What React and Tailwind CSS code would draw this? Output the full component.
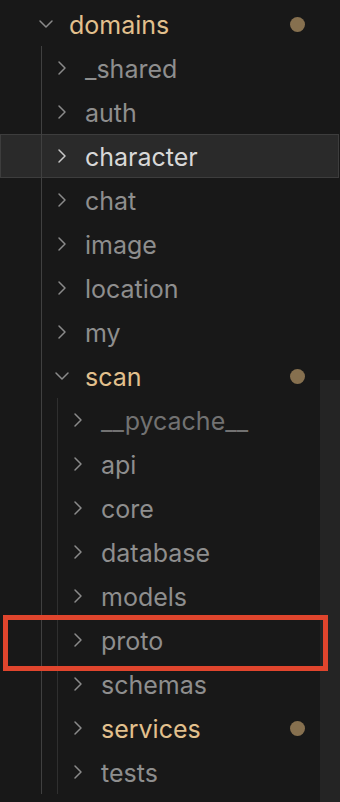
import React from "react";

const tree = {
  name: "domains",
  color: "yellow",
  dot: true,
  children: [
    { name: "_shared" },
    { name: "auth" },
    { name: "character", selected: true },
    { name: "chat" },
    { name: "image" },
    { name: "location" },
    { name: "my" },
    {
      name: "scan",
      color: "yellow",
      dot: true,
      children: [
        { name: "__pycache__", color: "dim" },
        { name: "api" },
        { name: "core" },
        { name: "database" },
        { name: "models" },
        { name: "proto" },
        { name: "schemas" },
        { name: "services", color: "yellow", dot: true },
        { name: "tests" },
      ],
    },
  ],
};

const padByDepth = ["pl-[38px]", "pl-[54px]", "pl-[70px]"];
const guideByDepth = ["left-[41px] bg-[#404040]", "left-[57px] bg-[#2f2f2f]"];

function Chevron({ open, bright }) {
  const stroke = bright ? "#c8c8c8" : "#8a8a8a";
  return (
    <svg width="16" height="16" viewBox="0 0 16 16" className="shrink-0">
      {open ? (
        <path d="M2 5 L8 11 L14 5" fill="none" stroke={stroke} strokeWidth="1.5" strokeLinecap="round" strokeLinejoin="round" />
      ) : (
        <path d="M5 2 L11 8 L5 14" fill="none" stroke={stroke} strokeWidth="1.5" strokeLinecap="round" strokeLinejoin="round" />
      )}
    </svg>
  );
}

function Row({ node, depth }) {
  const open = !!node.children;
  const textColor =
    node.color === "yellow"
      ? "text-[#e2c08d]"
      : node.color === "dim"
      ? "text-[#727272]"
      : node.selected
      ? "text-[#d8d8d8]"
      : "text-[#8e8e8e]";
  return (
    <div
      className={`flex h-[44px] items-center ${padByDepth[depth]} ${
        node.selected ? "bg-[#2a2a2a] ring-1 ring-inset ring-[#3d3d3d] mr-[1px]" : ""
      }`}
    >
      <Chevron open={open} bright={node.selected} />
      <span className={`ml-[15px] text-[25px] leading-none pt-[2px] ${textColor}`}>{node.name}</span>
      {node.dot && <span className="ml-auto mr-[35px] h-[15px] w-[15px] rounded-full bg-[#86704f]" />}
    </div>
  );
}

function Node({ node, depth }) {
  return (
    <div className="flex flex-col">
      <Row node={node} depth={depth} />
      {node.children && (
        <div className="relative flex flex-col">
          {node.children.map((c) => (
            <Node key={c.name} node={c} depth={depth + 1} />
          ))}
          <div className={`pointer-events-none absolute top-0 bottom-0 w-px ${guideByDepth[depth]}`} />
        </div>
      )}
    </div>
  );
}

export default function App() {
  return (
    <div
      className="relative flex h-[802px] w-[340px] flex-col overflow-hidden bg-[#181818] pt-[2px]"
      style={{ fontFamily: "Inter, 'Noto Sans', sans-serif" }}
    >
      <Node node={tree} depth={0} />
      {/* scrollbar track */}
      <div className="absolute right-0 top-[380px] bottom-0 w-[20px] bg-[#242424]" />
      {/* red annotation box */}
      <div className="absolute left-[3px] top-[615px] h-[56px] w-[325px] border-[5px] border-[#e0452d]" />
    </div>
  );
}
